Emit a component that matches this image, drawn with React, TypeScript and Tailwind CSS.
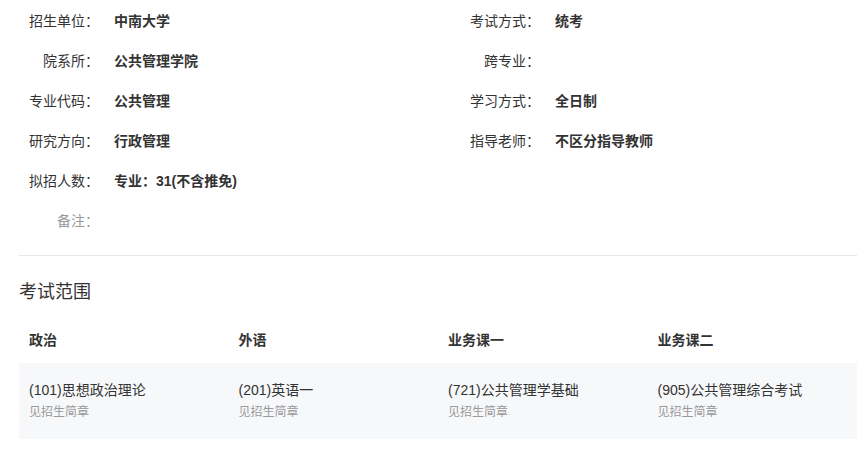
import React from "react";

const font = { fontFamily: '"Liberation Sans", "Noto Sans CJK SC", sans-serif' };

type Item = { label: string; value: string; muted?: boolean };

const left: Item[] = [
  { label: "招生单位：", value: "中南大学" },
  { label: "院系所：", value: "公共管理学院" },
  { label: "专业代码：", value: "公共管理" },
  { label: "研究方向：", value: "行政管理" },
  { label: "拟招人数：", value: "专业：31(不含推免)" },
  { label: "备注：", value: "", muted: true },
];

const right: Item[] = [
  { label: "考试方式：", value: "统考" },
  { label: "跨专业：", value: "" },
  { label: "学习方式：", value: "全日制" },
  { label: "指导老师：", value: "不区分指导教师" },
];

function Row({ item }: { item: Item }) {
  return (
    <div className="flex h-10 items-center text-[14px]">
      <div className={`w-[80px] text-right ${item.muted ? "text-[#999]" : "text-[#333]"}`}>{item.label}</div>
      <div className="ml-[15px] font-bold text-[#333]">{item.value}</div>
    </div>
  );
}

const cols = [
  { head: "政治", name: "(101)思想政治理论" },
  { head: "外语", name: "(201)英语一" },
  { head: "业务课一", name: "(721)公共管理学基础" },
  { head: "业务课二", name: "(905)公共管理综合考试" },
];

export default function App() {
  return (
    <div className="w-[859px] h-[450px] bg-white overflow-hidden" style={font}>
      <div className="ml-[19px] w-[838px] pt-px">
        <div className="flex">
          <div className="w-[441px]">
            {left.map((it) => (
              <Row key={it.label} item={it} />
            ))}
          </div>
          <div>
            {right.map((it) => (
              <Row key={it.label} item={it} />
            ))}
          </div>
        </div>
        <div className="mt-[14px] border-t border-[#e8e8e8]" />
        <div className="mt-[24px] h-6 leading-6 text-[18px] text-[#333]">考试范围</div>
        <div className="mt-[13px] grid grid-cols-4">
          {cols.map((c) => (
            <div key={c.head} className="h-[46px] flex items-center px-[10px] text-[14px] font-bold text-[#333]">
              {c.head}
            </div>
          ))}
        </div>
        <div className="grid grid-cols-4 bg-[#f7f8fa] h-[76px]">
          {cols.map((c) => (
            <div key={c.head} className="px-[10px] pt-[17px]">
              <div className="text-[14px] leading-[20px] text-[#333]">{c.name}</div>
              <div className="mt-[2px] text-[12px] leading-[20px] text-[#999]">见招生简章</div>
            </div>
          ))}
        </div>
      </div>
    </div>
  );
}
